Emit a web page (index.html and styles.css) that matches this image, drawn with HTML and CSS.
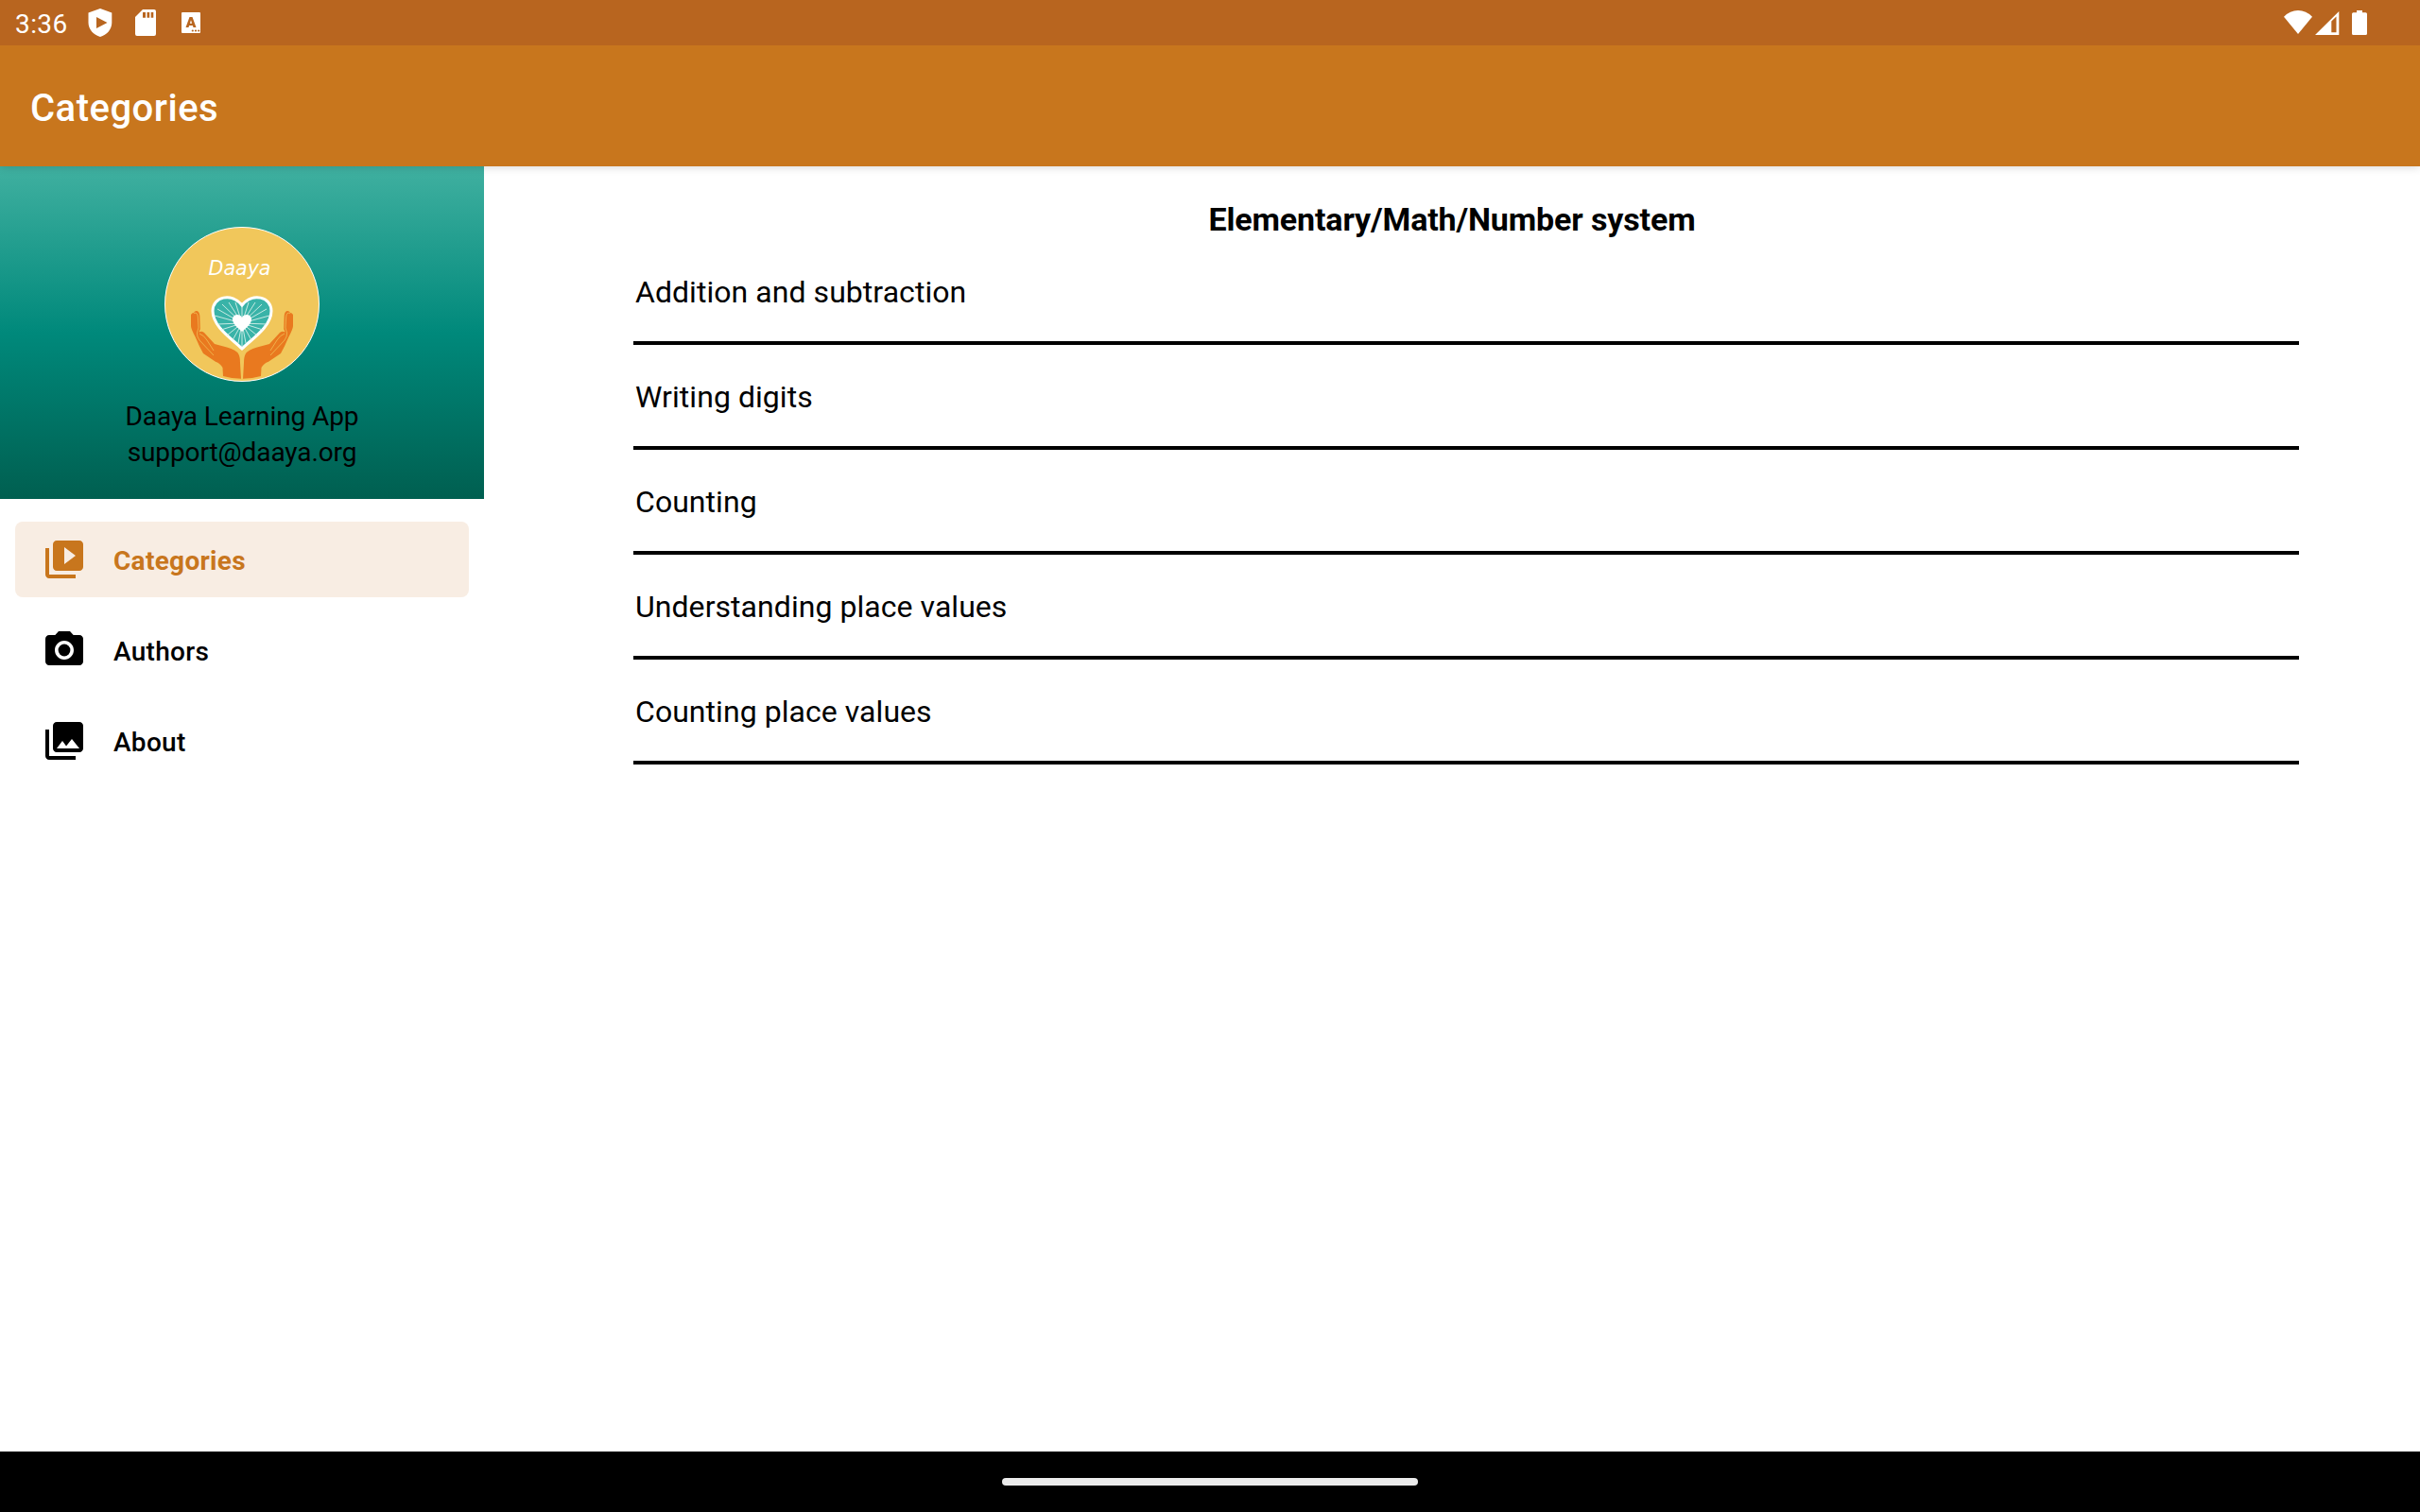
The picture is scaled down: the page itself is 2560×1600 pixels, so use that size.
FILE: index.html
```html
<!DOCTYPE html>
<html lang="en">
<head>
<meta charset="utf-8">
<title>Categories</title>
<link rel="stylesheet" href="styles.css">
</head>
<body>
<div class="statusbar">
  <span class="clock">3:36</span>
  <svg class="ic-shield" width="26" height="30" viewBox="0 0 26 30"><path fill="#fff" fill-rule="evenodd" d="M13 0 25.300 4.500V15C25.300 22 20 28 13 30 6 28 .5 22 .5 15V4.500ZM9 9V21L20.500 15Z"/></svg>
  <svg class="ic-sd" width="22" height="28" viewBox="0 0 22 28"><path fill="#fff" fill-rule="evenodd" d="M8 0H20Q22 0 22 2V26Q22 28 20 28H2Q0 28 0 26V8ZM8 3V8.700H11V3ZM12.500 3V8.700H15.200V3ZM16.700 3V8.700H19.300V3Z"/></svg>
  <svg class="ic-a" width="20" height="22" viewBox="0 0 20 22"><rect width="20" height="22" rx="1" fill="#fff"/><path fill="#b8651f" fill-rule="evenodd" d="M8.500 5H11.500L15.500 16H12.500L11.900 14H8.100L7.500 16H4.500ZM10 8.200 8.900 11.700H11.100Z"/><g fill="#b8651f"><circle cx="11.800" cy="19.500" r="1.100"/><circle cx="15" cy="19.500" r="1.100"/><circle cx="18.200" cy="19.500" r="1.100"/></g></svg>
  <svg class="ic-wifi" width="30" height="25" viewBox="0 0 30 25"><path fill="#fff" d="M0 6.700Q6.500 0 15 0T30 6.700L15 25Z"/></svg>
  <svg class="ic-cell" width="26" height="25" viewBox="0 0 26 25"><path fill="#fff" fill-rule="evenodd" d="M0 25 25.300 0V25ZM17.300 10.500V22.300H22.500V5.500Z"/></svg>
  <svg class="ic-batt" width="16" height="26" viewBox="0 0 16 26"><path fill="#fff" d="M5 0H11V2.300H14.500Q16 2.300 16 3.800V24.500Q16 26 14.500 26H1.500Q0 26 0 24.500V3.800Q0 2.300 1.500 2.300H5Z"/></svg>
</div>
<header class="appbar"><h1>Categories</h1></header>
<div class="body">
  <aside class="drawer">
    <div class="profile">
      <svg class="logo" width="164" height="164" viewBox="0 0 164 164">
        <circle cx="82" cy="82" r="81.500" fill="#f1c75b" stroke="#fff" stroke-width="1"/>
        <text x="46.500" y="51" class="logo-text" textLength="66" lengthAdjust="spacingAndGlyphs">Daaya</text>
        <g id="hand">
          <path fill="#e9791f" d="M28 93Q29 91 31 91Q32 88.500 34.500 89Q37 90 37.300 94L37.800 108 36.500 111.500Q39 110 42 112L53 124 66 127.500Q76 130 78.500 135Q80 138 80 144L81 160.700Q71 160.500 62 158L61.500 149Q59 144.500 54 142.700L41 134Q37 127 32.700 116.700 28 108 28 105Z"/>
          <path d="M31 91.500Q35 90 35.300 95L36 107 34.500 112Q34 116 37 120L52 136M37 113Q42 115 45 120L52 131" fill="none" stroke="#f1c75b" stroke-width=".7"/>
        </g>
        <use href="#hand" transform="matrix(-1 0 0 1 164 0)"/>
        <path d="M82 129C72 119 51 106 51 89C51 74 71 69 82 83C93 69 113 74 113 89C113 106 92 119 82 129Z" fill="#39b3a8" stroke="#fff" stroke-width="3"/>
        <path d="M82 102 82 84M82 102 75 80M82 102 68 80M82 102 61 82M82 102 56 87M82 102 53 94M82 102 56 103M82 102 60 109M82 102 66 115M82 102 72 120M82 102 78 123M82 102 82 126M82 102 89 80M82 102 96 80M82 102 103 82M82 102 108 87M82 102 111 94M82 102 108 103M82 102 104 109M82 102 98 115M82 102 92 120M82 102 86 123" stroke="#d8f0ea" stroke-width=".9"/>
        <path d="M82 111C78 107 72 103 72 98C72 93 79 91 82 96C85 91 92 93 92 98C92 103 86 107 82 111Z" fill="#fff"/>
      </svg>
      <div class="name">Daaya Learning App</div>
      <div class="mail">support@daaya.org</div>
    </div>
    <nav class="menu">
      <a class="item active"><svg width="48" height="48" viewBox="0 0 24 24"><path fill="currentColor" d="M4 6H2v14c0 1.100.9 2 2 2h14v-2H4V6zm16-4H8c-1.100 0-2 .9-2 2v12c0 1.100.9 2 2 2h12c1.100 0 2-.9 2-2V4c0-1.100-.9-2-2-2zm-8 12.500v-9l6 4.500-6 4.500z"/></svg><span>Categories</span></a>
      <a class="item"><svg width="48" height="48" viewBox="0 0 24 24"><circle fill="currentColor" cx="12" cy="12" r="3.200"/><path fill="currentColor" d="M9 2L7.170 4H4c-1.100 0-2 .9-2 2v12c0 1.100.9 2 2 2h16c1.100 0 2-.9 2-2V6c0-1.100-.9-2-2-2h-3.170L15 2H9zm3 15c-2.760 0-5-2.240-5-5s2.240-5 5-5 5 2.240 5 5-2.240 5-5 5z"/></svg><span>Authors</span></a>
      <a class="item"><svg width="48" height="48" viewBox="0 0 24 24"><path fill="currentColor" d="M22 16V4c0-1.100-.9-2-2-2H8c-1.100 0-2 .9-2 2v12c0 1.100.9 2 2 2h12c1.100 0 2-.9 2-2zm-11-4l2.030 2.710L16 11l4 5H8l3-4zM2 6v14c0 1.100.9 2 2 2h14v-2H4V6H2z"/></svg><span>About</span></a>
    </nav>
  </aside>
  <main class="content">
    <h2>Elementary/Math/Number system</h2>
    <ul class="list">
      <li>Addition and subtraction</li>
      <li>Writing digits</li>
      <li>Counting</li>
      <li>Understanding place values</li>
      <li>Counting place values</li>
    </ul>
  </main>
</div>
<div class="navbar"><div class="pill"></div></div>
</body>
</html>
```
FILE: styles.css
```css
* { box-sizing: border-box; }
body { margin: 0; width: 2560px; height: 1600px; display: flex; flex-direction: column; overflow: hidden; background: #fff; color: #000; font-family: Roboto, sans-serif; }
svg { display: block; flex: none; }
.statusbar { height: 48px; flex: none; background: #b8651f; color: #fff; display: flex; align-items: flex-start; padding-left: 16px; }
.clock { font-size: 28px; line-height: 32px; padding-top: 10px; width: 77px; letter-spacing: .4px; }
.ic-shield { margin-top: 9px; }
.ic-sd { margin: 10px 0 0 24px; }
.ic-a { margin: 13px 0 0 27px; }
.ic-wifi { margin: 11px 0 0 auto; }
.ic-cell { margin: 12px 0 0 3px; }
.ic-batt { margin: 11px 56px 0 13px; }
.appbar { height: 128px; flex: none; background: #c8761d; color: #fff; padding-left: 32px; display: flex; align-items: center; position: relative; box-shadow: 0 2px 8px rgba(0,0,0,.13); clip-path: inset(0 0 -16px 0); }
h1 { margin: 5px 0 0; font-size: 40px; line-height: 48px; font-weight: 500; letter-spacing: .5px; }
.body { flex: 1; display: flex; min-height: 0; }
.drawer { width: 512px; flex: none; }
.profile { height: 352px; background: linear-gradient(#40b0a0, #00897b 50%, #005f50); display: flex; flex-direction: column; align-items: center; padding-top: 64px; font-size: 28px; line-height: 38px; letter-spacing: -.1px; }
.logo-text { font: italic 21px "DejaVu Sans", sans-serif; fill: #fff; letter-spacing: 0; }
.name { margin-top: 18px; }
.menu { padding: 24px 16px 0; display: flex; flex-direction: column; gap: 16px; }
.item { height: 80px; border-radius: 8px; display: flex; align-items: center; padding-left: 28px; gap: 28px; font-size: 28px; line-height: 32px; font-weight: 500; letter-spacing: .3px; }
.item span { padding-top: 4px; }
.item.active { background: #f8ede3; color: #c8761d; font-weight: 700; }
.content { flex: 1; padding: 36px 128px 0 158px; }
h2 { margin: 0 -128px 0 -158px; font-size: 34px; line-height: 40px; font-weight: 700; text-align: center; letter-spacing: -.13px; }
.list { margin: 2px 0 0; padding: 0; list-style: none; }
.list li { height: 111px; border-bottom: 4px solid #000; padding: 36px 2px 0; font-size: 32px; line-height: 38px; letter-spacing: .05px; }
.navbar { height: 64px; flex: none; background: #000; display: flex; justify-content: center; padding-top: 28px; }
.pill { width: 440px; height: 8px; border-radius: 4px; background: #ebebeb; }
```
